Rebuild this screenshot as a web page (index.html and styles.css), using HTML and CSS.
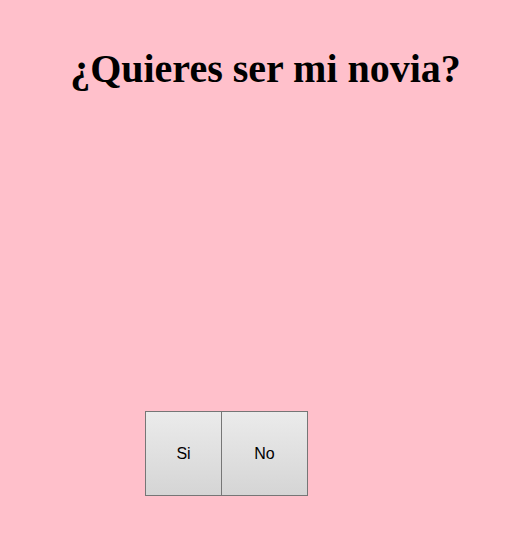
FILE: index.html
```html
<!DOCTYPE html>
<html lang="es">
<head>
<meta charset="utf-8">
<title>¿Quieres ser mi novia?</title>
<link rel="stylesheet" href="styles.css">
</head>
<body>
<h1 class="title">¿Quieres ser mi novia?</h1>
<div class="buttons">
  <button class="btn btn-si">Si</button>
  <button class="btn btn-no">No</button>
</div>
</body>
</html>
```

FILE: styles.css
```css
html, body {
  margin: 0;
  padding: 0;
}
body {
  background: #ffc0cb;
  width: 531px;
  height: 556px;
  overflow: hidden;
}
.title {
  margin: 0;
  padding-top: 46px;
  text-align: center;
  font-family: "Liberation Serif", serif;
  font-weight: bold;
  font-size: 40px;
  line-height: 46px;
  color: #000;
}
.buttons {
  display: flex;
  margin-top: 319px;
  padding-left: 145px;
}
.btn {
  box-sizing: border-box;
  height: 85px;
  margin: 0;
  padding: 0;
  border: 1px solid #767676;
  border-radius: 0;
  background: linear-gradient(#ebebeb, #d5d5d5);
  font-family: "Liberation Sans", Arial, sans-serif;
  font-size: 16px;
  color: #000;
}
.btn-si {
  width: 77px;
}
.btn-no {
  width: 87px;
  margin-left: -1px;
}
```
